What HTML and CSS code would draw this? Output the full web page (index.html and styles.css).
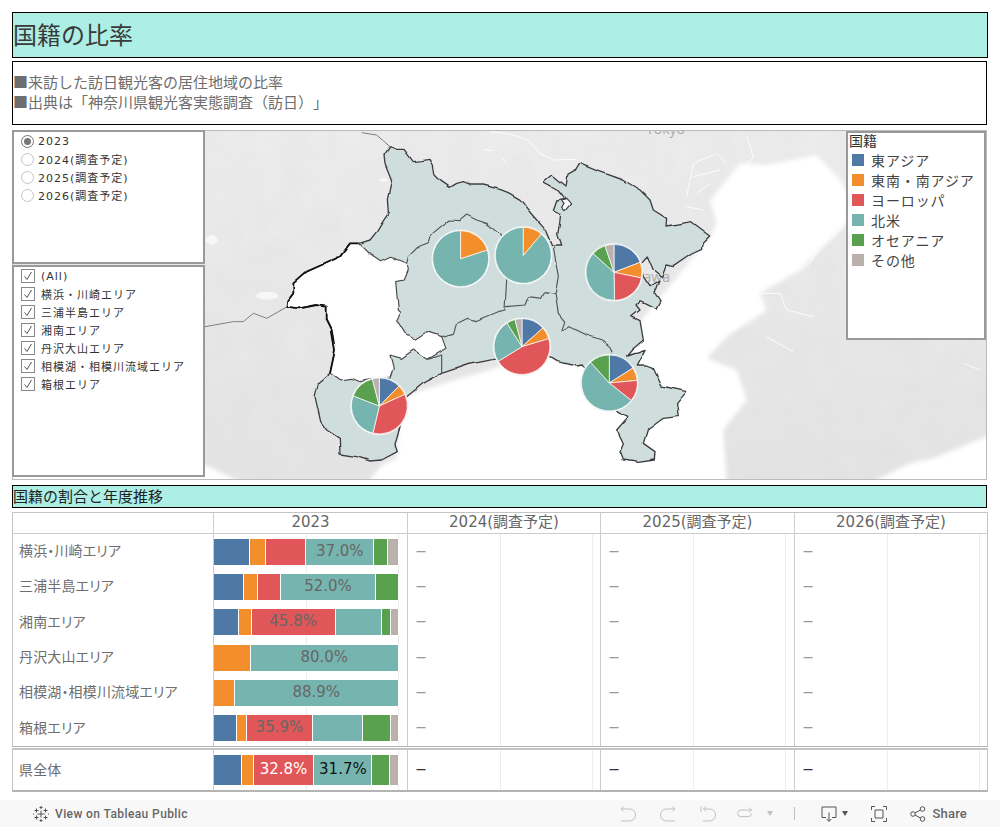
FILE: index.html
```html
<!DOCTYPE html>
<html lang="ja">
<head>
<meta charset="utf-8">
<title>国籍の比率</title>
<link rel="stylesheet" href="styles.css">
</head>
<body>
<main class="dash">
  <h1 class="title">国籍の比率</h1>
  <section class="desc">
    <p>■来訪した訪日観光客の居住地域の比率</p>
    <p>■出典は「神奈川県観光客実態調査（訪日）」</p>
  </section>

  <section class="map">
    <svg class="map-svg" viewBox="-561 3 2919 1044" preserveAspectRatio="none">
      <defs>
        <linearGradient id="land" x1="0" y1="0" x2="0" y2="1">
          <stop offset="0" stop-color="#ececec"/>
          <stop offset="1" stop-color="#e4e4e4"/>
        </linearGradient>
        <filter id="mottle" x="0" y="0" width="100%" height="100%">
          <feTurbulence type="fractalNoise" baseFrequency=".012" numOctaves="4" seed="4"/>
          <feColorMatrix type="matrix" values="0 0 0 0 .5  0 0 0 0 .5  0 0 0 0 .5  .12 0 0 0 -.03"/>
        </filter>
        <filter id="soft" x="-5%" y="-5%" width="110%" height="110%">
          <feGaussianBlur stdDeviation="7"/>
        </filter>
        <filter id="wiggle" x="-5%" y="-5%" width="110%" height="110%" color-interpolation-filters="sRGB">
          <feTurbulence type="fractalNoise" baseFrequency=".022" numOctaves="1" seed="11" result="n"/>
          <feDisplacementMap in="SourceGraphic" in2="n" scale="14" xChannelSelector="R" yChannelSelector="G"/>
        </filter>
      </defs>
      <rect x="-561" y="3" width="2919" height="1044" fill="url(#land)"/>
      <rect x="-561" y="3" width="2919" height="1044" filter="url(#mottle)"/>
      <g filter="url(#soft)">
        <path class="sea" d="M1532 318L1550 280 1530 210 1580 150 1620 100 1700 105 1850 75 1920 150 1950 200 1940 280 1880 340 1800 420 1680 490 1700 540 1580 620 1520 685 1610 720 1640 810 1570 900 1580 1060 500 1060 545 1005 590 985 600 800 1000 680 1300 600Z"/>
        <path class="sea" d="M2010 1060L2130 1000 2200 985 2370 915V1060Z"/>
        <path class="sea" d="M-580 1005H15L130 1060H-580Z"/>
      </g>
      <g class="river">
        <path d="M870 5L930 12 985 30 1020 70 1060 90 1130 88"/>
        <path d="M850 58L880 62M905 82L920 100"/>
        <path d="M1460 200L1480 100 1550 70 1580 100M1480 140L1560 120M1490 190L1530 160M1460 230L1510 240"/>
        <path d="M1680 490L1740 490 1760 540 1840 560M1700 620L1780 665M1640 20L1660 80 1640 105"/>
        <path d="M1800 420L1830 400 1860 350 1930 290M2290 700L2340 720"/>
      </g>
      <g class="blob">
        <ellipse cx="202" cy="497" rx="34" ry="12"/>
        <ellipse cx="35" cy="330" rx="18" ry="14"/>
        <ellipse cx="550" cy="150" rx="12" ry="5"/>
      </g>
      <path class="pref-line" d="M15 590L100 575 130 575 160 550 200 565 262 530"/>
      <path class="pref-line" d="M485 8L530 15 570 50"/>
      <text class="map-label" x="1455" y="12" text-anchor="end">Tokyo</text>
      <text class="map-label" x="1410" y="456" text-anchor="end">Kanagawa</text>
      <g class="shore">
        <g filter="url(#wiggle)">
          <path class="pref" d="M478 340L510 330 530 305 545 280 565 250 562 205 575 150 555 100 552 75 570 50 590 58 612 58 640 95 665 92 690 88 700 105 705 135 725 155 750 172 770 160 790 155 815 165 850 165 900 178 925 188 960 208 985 240 1010 270 1035 298 1055 345 1085 345 1073 310 1080 270 1082 250 1060 240 1070 210 1095 205 1075 180 1030 155 1055 135 1095 168 1100 140 1125 125 1140 100 1200 125 1270 150 1320 180 1350 210 1360 240 1400 265 1398 288 1475 275 1532 318 1505 345 1505 358 1475 372 1420 410 1398 405 1385 440 1360 420 1342 378 1322 400 1330 440 1350 470 1380 450 1365 490 1380 512 1368 535 1320 512 1308 525 1320 540 1295 560 1320 572 1330 630 1295 660 1280 678 1338 658 1312 708 1342 708 1360 715 1385 768 1460 785 1430 820 1435 860 1390 865 1342 900 1330 940 1365 965 1363 990 1315 997 1270 990 1260 965 1270 942 1250 900 1285 860 1255 845 1200 790 1150 705 1130 708 1075 695 1050 680 880 688 800 705 725 730 670 760 620 800 590 930 585 945 592 965 545 990 510 993 470 980 420 972 418 925 380 900 362 875 345 800 355 760 390 730Z"/>
          <path class="bay" d="M1085 210L1098 205 1112 222 1095 242 1085 232 1092 220Z"/>
          <path class="hole" d="M450 340L478 340 510 372 545 395 575 382 618 400 622 420 610 450 587 455 595 540 603 548 590 570 615 610 645 628 680 605 725 620 738 655 680 688 640 660 605 685 570 675 580 715 570 745 540 745 515 748 480 755 455 745 420 750 390 730 405 660 395 600 380 570 380 530 350 525 300 535 262 530 265 510 280 490 280 460 320 425 365 405 420 380Z"/>
          <path class="border-thick" d="M390 730L405 660 395 600 380 570 380 530 350 525 300 535 262 530 265 510 280 490 280 460 320 425 365 405 420 380 450 340 478 340"/>
          <g class="inner-line">
            <path d="M620 400L625 380 660 345 685 335 690 320 750 270 780 272 800 255 830 270 860 280 905 315 920 360"/>
            <path d="M920 448L915 540 895 545 830 572 800 565 770 580 760 610 725 620"/>
            <path d="M918 530L975 525 985 500 1025 505 1035 485 1065 490"/>
            <path d="M1060 350L1075 440 1065 490 1075 550 1095 575 1085 605 1110 590 1160 615 1205 630 1230 650 1240 672"/>
            <path d="M680 688L725 675V730"/>
          </g>
        </g>
      </g>

      <g class="pie" transform="translate(782 386) scale(3)">
        <circle class="halo" r="29"/>
        <path class="c4" d="M0 0L26.6 -8.7A28 28 0 1 1 0 -28Z"/>
        <path class="c2" d="M0 0V-28A28 28 0 0 1 26.6 -8.7Z"/>
      </g>
      <g class="pie" transform="translate(970 376) scale(3)">
        <circle class="halo" r="29"/>
        <path class="c4" d="M0 0L18 -21.4A28 28 0 1 1 0 -28Z"/>
        <path class="c2" d="M0 0V-28A28 28 0 0 1 18 -21.4Z"/>
      </g>
      <g class="pie" transform="translate(966 650) scale(3)">
        <circle class="halo" r="29"/>
        <path class="c1" d="M0 0V-28A28 28 0 0 1 20.9 -18.7Z"/>
        <path class="c2" d="M0 0L20.9 -18.7A28 28 0 0 1 26.8 -8Z"/>
        <path class="c3" d="M0 0L26.8 -8A28 28 0 0 1 -23.8 14.7Z"/>
        <path class="c4" d="M0 0L-23.8 14.7A28 28 0 0 1 -15 -23.6Z"/>
        <path class="c5" d="M0 0L-15 -23.6A28 28 0 0 1 -7 -27.1Z"/>
        <path class="c6" d="M0 0L-7 -27.1A28 28 0 0 1 0 -28Z"/>
      </g>
      <g class="pie" transform="translate(538 828) scale(3)">
        <circle class="halo" r="29"/>
        <path class="c1" d="M0 0V-28A28 28 0 0 1 19.7 -19.9Z"/>
        <path class="c2" d="M0 0L19.7 -19.9A28 28 0 0 1 25.5 -11.6Z"/>
        <path class="c3" d="M0 0L25.5 -11.6A28 28 0 0 1 -6.4 27.2Z"/>
        <path class="c4" d="M0 0L-6.4 27.2A28 28 0 0 1 -26.1 -10.1Z"/>
        <path class="c5" d="M0 0L-26.1 -10.1A28 28 0 0 1 -7 -27.1Z"/>
        <path class="c6" d="M0 0L-7 -27.1A28 28 0 0 1 0 -28Z"/>
      </g>
      <g class="pie" transform="translate(1242 427) scale(3)">
        <circle class="halo" r="29"/>
        <path class="c1" d="M0 0V-28A28 28 0 0 1 26.2 -10Z"/>
        <path class="c2" d="M0 0L26.2 -10A28 28 0 0 1 27.4 5.6Z"/>
        <path class="c3" d="M0 0L27.4 5.6A28 28 0 0 1 0.5 28Z"/>
        <path class="c4" d="M0 0L0.5 28A28 28 0 0 1 -20.8 -18.8Z"/>
        <path class="c5" d="M0 0L-20.8 -18.8A28 28 0 0 1 -9 -26.5Z"/>
        <path class="c6" d="M0 0L-9 -26.5A28 28 0 0 1 0 -28Z"/>
      </g>
      <g class="pie" transform="translate(1228 759) scale(3)">
        <circle class="halo" r="29"/>
        <path class="c1" d="M0 0V-28A28 28 0 0 1 23.6 -15Z"/>
        <path class="c2" d="M0 0L23.6 -15A28 28 0 0 1 27.9 -2.6Z"/>
        <path class="c3" d="M0 0L27.9 -2.6A28 28 0 0 1 21.9 17.4Z"/>
        <path class="c4" d="M0 0L21.9 17.4A28 28 0 1 1 -18.8 -20.8Z"/>
        <path class="c5" d="M0 0L-18.8 -20.8A28 28 0 0 1 0 -28Z"/>
      </g>
    </svg>

    <div class="filters">
      <div class="panel panel-year">
        <label class="opt"><span class="radio on"></span>2023</label>
        <label class="opt"><span class="radio"></span>2024(調査予定)</label>
        <label class="opt"><span class="radio"></span>2025(調査予定)</label>
        <label class="opt"><span class="radio"></span>2026(調査予定)</label>
      </div>
      <div class="panel panel-area">
        <label class="opt"><span class="check"><svg viewBox="0 0 12 12"><path d="M2.5 6.5L5 9.5 9.5 2"/></svg></span>(All)</label>
        <label class="opt"><span class="check"><svg viewBox="0 0 12 12"><path d="M2.5 6.5L5 9.5 9.5 2"/></svg></span>横浜・川崎エリア</label>
        <label class="opt"><span class="check"><svg viewBox="0 0 12 12"><path d="M2.5 6.5L5 9.5 9.5 2"/></svg></span>三浦半島エリア</label>
        <label class="opt"><span class="check"><svg viewBox="0 0 12 12"><path d="M2.5 6.5L5 9.5 9.5 2"/></svg></span>湘南エリア</label>
        <label class="opt"><span class="check"><svg viewBox="0 0 12 12"><path d="M2.5 6.5L5 9.5 9.5 2"/></svg></span>丹沢大山エリア</label>
        <label class="opt"><span class="check"><svg viewBox="0 0 12 12"><path d="M2.5 6.5L5 9.5 9.5 2"/></svg></span>相模湖・相模川流域エリア</label>
        <label class="opt"><span class="check"><svg viewBox="0 0 12 12"><path d="M2.5 6.5L5 9.5 9.5 2"/></svg></span>箱根エリア</label>
      </div>
    </div>

    <div class="legend">
      <div class="legend-title">国籍</div>
      <div class="legend-item"><span class="swatch b1"></span>東アジア</div>
      <div class="legend-item"><span class="swatch b2"></span>東南・南アジア</div>
      <div class="legend-item"><span class="swatch b3"></span>ヨーロッパ</div>
      <div class="legend-item"><span class="swatch b4"></span>北米</div>
      <div class="legend-item"><span class="swatch b5"></span>オセアニア</div>
      <div class="legend-item"><span class="swatch b6"></span>その他</div>
    </div>
  </section>

  <h2 class="subtitle">国籍の割合と年度推移</h2>

  <section class="table">
    <div class="row head">
      <div class="cell"></div>
      <div class="cell">2023</div>
      <div class="cell">2024(調査予定)</div>
      <div class="cell">2025(調査予定)</div>
      <div class="cell">2026(調査予定)</div>
    </div>
    <div class="body">
      <div class="row">
        <div class="cell name">横浜・川崎エリア</div>
        <div class="cell plot"><div class="bar">
          <span class="seg b1" style="width:19.3%"></span><span class="seg b2" style="width:9.2%"></span><span class="seg b3" style="width:21.7%"></span><span class="seg b4" style="width:36.9%">37.0%</span><span class="seg b5" style="width:7.6%"></span><span class="seg b6" style="width:5.3%"></span>
        </div></div>
        <div class="cell plot"><span class="dash-mark">—</span></div>
        <div class="cell plot"><span class="dash-mark">—</span></div>
        <div class="cell plot"><span class="dash-mark">—</span></div>
      </div>
      <div class="row">
        <div class="cell name">三浦半島エリア</div>
        <div class="cell plot"><div class="bar">
          <span class="seg b1" style="width:16.1%"></span><span class="seg b2" style="width:7.6%"></span><span class="seg b3" style="width:12.5%"></span><span class="seg b4" style="width:52.1%">52.0%</span><span class="seg b5" style="width:11.7%"></span>
        </div></div>
        <div class="cell plot"><span class="dash-mark">—</span></div>
        <div class="cell plot"><span class="dash-mark">—</span></div>
        <div class="cell plot"><span class="dash-mark">—</span></div>
      </div>
      <div class="row">
        <div class="cell name">湘南エリア</div>
        <div class="cell plot"><div class="bar">
          <span class="seg b1" style="width:13.4%"></span><span class="seg b2" style="width:7.1%"></span><span class="seg b3" style="width:45.6%">45.8%</span><span class="seg b4" style="width:25%"></span><span class="seg b5" style="width:4.9%"></span><span class="seg b6" style="width:4%"></span>
        </div></div>
        <div class="cell plot"><span class="dash-mark">—</span></div>
        <div class="cell plot"><span class="dash-mark">—</span></div>
        <div class="cell plot"><span class="dash-mark">—</span></div>
      </div>
      <div class="row">
        <div class="cell name">丹沢大山エリア</div>
        <div class="cell plot"><div class="bar">
          <span class="seg b2" style="width:19.9%"></span><span class="seg b4" style="width:80.1%">80.0%</span>
        </div></div>
        <div class="cell plot"><span class="dash-mark">—</span></div>
        <div class="cell plot"><span class="dash-mark">—</span></div>
        <div class="cell plot"><span class="dash-mark">—</span></div>
      </div>
      <div class="row">
        <div class="cell name">相模湖・相模川流域エリア</div>
        <div class="cell plot"><div class="bar">
          <span class="seg b2" style="width:11.2%"></span><span class="seg b4" style="width:88.8%">88.9%</span>
        </div></div>
        <div class="cell plot"><span class="dash-mark">—</span></div>
        <div class="cell plot"><span class="dash-mark">—</span></div>
        <div class="cell plot"><span class="dash-mark">—</span></div>
      </div>
      <div class="row">
        <div class="cell name">箱根エリア</div>
        <div class="cell plot"><div class="bar">
          <span class="seg b1" style="width:12.3%"></span><span class="seg b2" style="width:5.4%"></span><span class="seg b3" style="width:36.3%">35.9%</span><span class="seg b4" style="width:27.1%"></span><span class="seg b5" style="width:15.2%"></span><span class="seg b6" style="width:3.7%"></span>
        </div></div>
        <div class="cell plot"><span class="dash-mark">—</span></div>
        <div class="cell plot"><span class="dash-mark">—</span></div>
        <div class="cell plot"><span class="dash-mark">—</span></div>
      </div>
    </div>
  </section>

  <section class="table total">
    <div class="row">
      <div class="cell name">県全体</div>
      <div class="cell plot"><div class="bar bar-total">
        <span class="seg b1" style="width:15%"></span><span class="seg b2" style="width:6.5%"></span><span class="seg b3 light" style="width:33.1%">32.8%</span><span class="seg b4 dark" style="width:31.5%">31.7%</span><span class="seg b5" style="width:9.8%"></span><span class="seg b6" style="width:4.1%"></span>
      </div></div>
      <div class="cell plot"><span class="dash-mark">—</span></div>
      <div class="cell plot"><span class="dash-mark">—</span></div>
      <div class="cell plot"><span class="dash-mark">—</span></div>
    </div>
  </section>
</main>

<footer class="toolbar">
  <a class="public">
    <svg class="logo" viewBox="0 0 16 16"><path d="M8 4.5v7M4.5 8h7M3.5 2.5v4M1.5 4.5h4M12.500 2.500v4M10.500 4.500h4M3.500 9.500v4M1.500 11.500h4M12.500 9.500v4M10.500 11.500h4M8 0v3M6.500 1.500h3M8 13v3M6.500 14.500h3M0 7v2M16 7v2"/></svg>
    View on Tableau Public
  </a>
  <div class="tools">
    <svg class="ico muted i-undo" viewBox="0 0 16 16"><path d="M3.500 0.500L1 3l2.500 2.500M1 3h8.500a6 6 0 0 1 0 12H1"/></svg>
    <svg class="ico muted i-redo" viewBox="0 0 16 16"><path d="M12.500 0.500L15 3l-2.500 2.500M15 3H6.500a6 6 0 0 0 0 12H15"/></svg>
    <svg class="ico muted i-revert" viewBox="0 0 16 16"><path d="M1 0.500V6M6 0.500L3.500 3 6 5.500M3.500 3h6a6 6 0 0 1 0 12H3"/></svg>
    <svg class="ico muted i-refresh" viewBox="0 0 16 16"><path d="M12 1.500l2.500 2.500L12 6.500M14.500 4H4a3.300 3.300 0 0 0 0 6.600h7a3.300 3.300 0 0 0 3.500 -3"/></svg>
    <span class="caret muted-caret"></span>
    <span class="divider"></span>
    <svg class="ico i-device" viewBox="0 0 16 16"><path d="M5 11.500H1V1h14v10.500h-4M8 6.500V15M5.800 13L8 15.500 10.200 13"/></svg>
    <span class="caret"></span>
    <svg class="ico i-full" viewBox="0 0 16 16"><path d="M4 4h8v8H4zM0.500 4V0.500H4M12 0.500h3.500V4M15.500 12v3.500H12M4 15.500H0.500V12"/></svg>
    <svg class="ico i-share" viewBox="0 0 16 16"><circle cx="3" cy="8" r="2.300"/><circle cx="12.500" cy="3" r="2.300"/><circle cx="12.500" cy="13" r="2.300"/><path d="M5 6.900L10.500 4M5 9.100l5.500 2.900"/></svg>
    <span class="share">Share</span>
  </div>
</footer>
</body>
</html>
```

FILE: styles.css
```css
* { box-sizing: border-box; }
html, body { margin: 0; padding: 0; }
body {
  width: 1000px;
  height: 827px;
  overflow: hidden;
  background: #fff;
  font-family: "DejaVu Sans", "Noto Sans CJK JP", sans-serif;
  color: #444;
  text-spacing-trim: space-all;
}
.dash {
  display: flex;
  flex-direction: column;
  padding: 12px 12px 0;
  height: 800px;
}
.title {
  margin: 0;
  height: 46px;
  line-height: 41px;
  padding-left: 0;
  font-size: 24px;
  font-weight: 400;
  color: #3a3a3a;
  background: #adeee5;
  border: 1px solid #000;
  font-family: "Noto Sans CJK JP", sans-serif;
}
.desc {
  margin-top: 3px;
  width: 975px;
  height: 64px;
  padding: 10px 0 0 0;
  border: 1px solid #000;
  font-family: "Noto Sans CJK JP", sans-serif;
  font-size: 15px;
  color: #6e6e6e;
}
.desc p { margin: 0; height: 20px; line-height: 20px; }

.map {
  position: relative;
  margin-top: 5px;
  width: 975px;
  height: 350px;
  border: 1px solid #bbb;
  display: flex;
  justify-content: space-between;
  align-items: flex-start;
}
.map-svg { position: absolute; left: 0; top: 0; width: 973px; height: 348px; display: block; }
.sea { fill: #fff; }
.river { fill: none; stroke: #fff; stroke-width: 3; opacity: .85; }
.blob { fill: #fff; opacity: .65; }
.pref-line { fill: none; stroke: #777; stroke-width: 3; filter: drop-shadow(0 0 1px #fff); }
.map-label { font-family: "Open Sans", sans-serif; font-size: 42px; fill: #aaa; }
.shore { filter: drop-shadow(0 0 1.5px #fff); }
.pref { fill: #cfdedd; stroke: #3c3c3c; stroke-width: 4; stroke-linejoin: round; }
.bay { fill: #fff; stroke: #3c3c3c; stroke-width: 3.5; }
.hole { fill: #fff; stroke: #4a4a4a; stroke-width: 3.5; stroke-linejoin: round; }
.border-thick { fill: none; stroke: #111; stroke-width: 5.5; stroke-linejoin: round; }
.inner-line { fill: none; stroke: #555; stroke-width: 3.5; stroke-linejoin: round; }
.pie path { stroke: #fff; stroke-width: .7; stroke-linejoin: round; }
.halo { fill: #fff; stroke: #e8e8e8; stroke-width: .5; }
.c1 { fill: #4e79a7; }
.c2 { fill: #f28e2b; }
.c3 { fill: #e15759; }
.c4 { fill: #76b5af; }
.c5 { fill: #59a14f; }
.c6 { fill: #bab0ac; }

.filters {
  position: relative;
  display: flex;
  flex-direction: column;
  gap: 1px;
  margin-top: -1px;
  margin-left: -1px;
}
.panel {
  width: 193px;
  border: 2px solid #999;
  background: #fff;
  font-size: 11px;
  color: #333;
  letter-spacing: 1px;
}
.panel-year { height: 134px; }
.panel-area { height: 212px; }
.opt { display: flex; align-items: center; height: 18px; white-space: nowrap; }
.panel-year .opt { padding-left: 7px; }
.panel-area .opt { padding-left: 7px; }
.radio {
  width: 13px;
  height: 13px;
  margin-right: 4px;
  border: 1px solid #c4c4c4;
  border-radius: 50%;
  flex: none;
  display: flex;
  align-items: center;
  justify-content: center;
  background: #fff;
}
.radio.on { border-color: #777; }
.radio.on::after { content: ""; width: 7px; height: 7px; border-radius: 50%; background: #777; }
.check {
  width: 14px;
  height: 14px;
  margin-right: 6px;
  border: 1px solid #888;
  flex: none;
  display: block;
}
.check svg { display: block; width: 12px; height: 12px; fill: none; stroke: #555; stroke-width: 1; }

.legend {
  position: relative;
  width: 140px;
  height: 209px;
  border: 2px solid #999;
  background: #fff;
  padding: 0 0 0 1px;
  font-size: 14px;
  font-family: "Noto Sans CJK JP", sans-serif;
  color: #444;
}
.legend-title { height: 17px; line-height: 15px; color: #333; }
.legend-item {
  display: flex;
  align-items: center;
  height: 20px;
  padding-left: 3px;
  letter-spacing: .9px;
  white-space: nowrap;
}
.swatch { width: 12px; height: 12px; margin-right: 7px; flex: none; }
.b1 { background: #4e79a7; }
.b2 { background: #f28e2b; }
.b3 { background: #e15759; }
.b4 { background: #76b5af; }
.b5 { background: #59a14f; }
.b6 { background: #bab0ac; }

.subtitle {
  margin: 5px 0 0;
  width: 975px;
  height: 23px;
  line-height: 19px;
  padding-left: 0;
  font-size: 15px;
  font-weight: 400;
  color: #222;
  background: #adeee5;
  border: 1px solid #000;
  font-family: "Noto Sans CJK JP", sans-serif;
}

.table {
  margin-top: 4px;
  border: 1px solid #c4c4c4;
  border-bottom-color: #b4b4b4;
  height: 235px;
  display: flex;
  flex-direction: column;
}
.row {
  display: grid;
  grid-template-columns: 201px 194px 193px 194px 192px;
}
.cell { border-right: 1px solid #ccc; min-width: 0; }
.cell:last-child { border-right: 0; }
.head {
  height: 21px;
  border-bottom: 1px solid #ccc;
  text-align: center;
  font-size: 15px;
  line-height: 19px;
  color: #666;
}
.body { flex: 1; display: grid; grid-template-rows: repeat(6, 1fr); }
.name {
  display: flex;
  align-items: center;
  padding: 0 0 3px 6px;
  font-family: "Noto Sans CJK JP", sans-serif;
  font-feature-settings: "palt";
  font-size: 14px;
  letter-spacing: .15px;
  color: #6e6e6e;
  white-space: nowrap;
}
.plot {
  display: flex;
  align-items: center;
  background:
    linear-gradient(#eee, #eee) 92px 0 / 1px 100% no-repeat,
    linear-gradient(#eee, #eee) 184px 0 / 1px 100% no-repeat;
}
.bar { display: flex; width: 185px; height: 26px; padding-right: 1px; background: #fff; }
.bar-total { height: 30px; }
.seg {
  display: flex;
  align-items: center;
  justify-content: center;
  height: 100%;
  padding-bottom: 2px;
  border-right: 1px solid #fff;
  background-clip: padding-box;
  font-size: 15px;
  color: #666;
  white-space: nowrap;
}
.seg:last-child { border-right: 0; }
.seg.light { color: #fff; }
.seg.dark { color: #111; }
.dash-mark { margin-left: 8px; padding-bottom: 1px; font-size: 10px; font-weight: 700; color: #999; }

.total {
  margin-top: 1px;
  height: 44px;
  border-top-width: 2px;
  border-bottom-width: 2px;
}
.total .row { height: 100%; }
.total .dash-mark { color: #333; }

.toolbar {
  display: flex;
  align-items: center;
  justify-content: space-between;
  height: 27px;
  background: #f8f8f8;
  padding: 0 33px 0 33px;
  font-family: "Roboto", sans-serif;
  font-size: 12px;
  font-weight: 500;
  color: #666;
}
.public { display: flex; align-items: center; gap: 6px; letter-spacing: .4px; }
.logo { width: 16px; height: 16px; fill: none; stroke: #555; stroke-width: 1; }
.tools { display: flex; align-items: center; }
.ico { width: 16px; height: 16px; fill: none; stroke: #555; stroke-width: 1; flex: none; }
.muted { stroke: #c0c0c0; }
.i-redo { margin-left: 24px; }
.i-revert { margin-left: 24px; }
.i-refresh { margin-left: 21px; }
.caret {
  width: 0;
  height: 0;
  margin-left: 5px;
  border: 3.500px solid transparent;
  border-top: 5px solid #555;
  border-bottom: 0;
}
.muted-caret { margin-left: 14px; border-top-color: #c0c0c0; }
.divider { width: 1px; height: 13px; margin: 0 26px 0 21px; background: #c0c0c0; }
.i-full { margin-left: 23px; }
.i-share { margin-left: 23px; }
.share { margin-left: 6px; font-size: 13px; letter-spacing: .2px; }
```
